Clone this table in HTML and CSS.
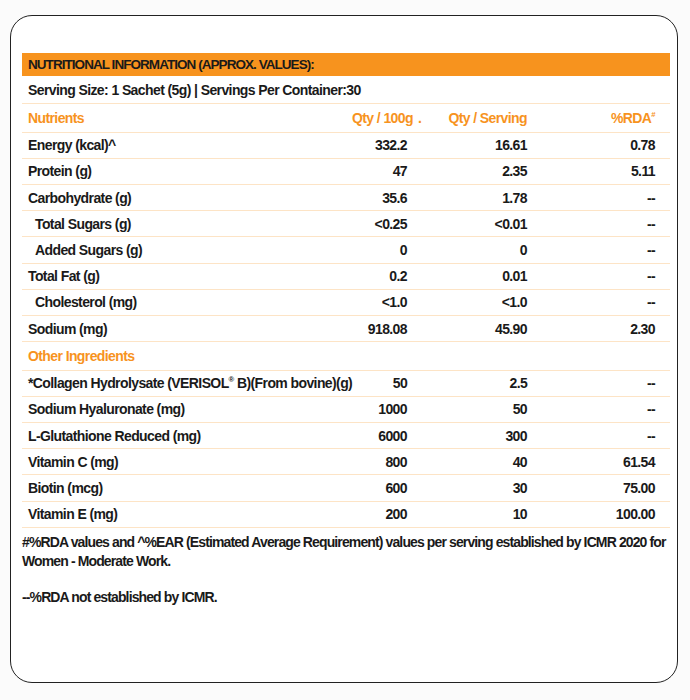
FILE: index.html
```html
<!DOCTYPE html>
<html lang="en">
<head>
<meta charset="utf-8">
<title>Nutritional Information</title>
<link rel="stylesheet" href="styles.css">
</head>
<body>
<div class="card">
  <div class="facts">
    <div class="title">NUTRITIONAL INFORMATION (APPROX. VALUES):</div>
    <div class="row serving">Serving Size: 1 Sachet (5g) | Servings Per Container:30</div>
    <div class="row head">
      <span>Nutrients</span>
      <span class="num"><span class="over">Qty / 100g<span class="dot">.</span></span></span>
      <span class="num">Qty / Serving</span>
      <span class="num">%RDA<sup>#</sup></span>
    </div>
    <div class="row"><span>Energy (kcal)^</span><span class="num">332.2</span><span class="num">16.61</span><span class="num">0.78</span></div>
    <div class="row"><span>Protein (g)</span><span class="num">47</span><span class="num">2.35</span><span class="num">5.11</span></div>
    <div class="row"><span>Carbohydrate (g)</span><span class="num">35.6</span><span class="num">1.78</span><span class="num">--</span></div>
    <div class="row sub"><span>Total Sugars (g)</span><span class="num">&lt;0.25</span><span class="num">&lt;0.01</span><span class="num">--</span></div>
    <div class="row sub"><span>Added Sugars (g)</span><span class="num">0</span><span class="num">0</span><span class="num">--</span></div>
    <div class="row"><span>Total Fat (g)</span><span class="num">0.2</span><span class="num">0.01</span><span class="num">--</span></div>
    <div class="row sub"><span>Cholesterol (mg)</span><span class="num">&lt;1.0</span><span class="num">&lt;1.0</span><span class="num">--</span></div>
    <div class="row"><span>Sodium (mg)</span><span class="num">918.08</span><span class="num">45.90</span><span class="num">2.30</span></div>
    <div class="row head"><span>Other Ingredients</span></div>
    <div class="row"><span>*Collagen Hydrolysate (VERISOL<sup>®</sup> B)(From bovine)(g)</span><span class="num">50</span><span class="num">2.5</span><span class="num">--</span></div>
    <div class="row"><span>Sodium Hyaluronate (mg)</span><span class="num">1000</span><span class="num">50</span><span class="num">--</span></div>
    <div class="row"><span>L-Glutathione Reduced (mg)</span><span class="num">6000</span><span class="num">300</span><span class="num">--</span></div>
    <div class="row"><span>Vitamin C (mg)</span><span class="num">800</span><span class="num">40</span><span class="num">61.54</span></div>
    <div class="row"><span>Biotin (mcg)</span><span class="num">600</span><span class="num">30</span><span class="num">75.00</span></div>
    <div class="row"><span>Vitamin E (mg)</span><span class="num">200</span><span class="num">10</span><span class="num">100.00</span></div>
  </div>
  <div class="notes">
    <p>#%RDA values and ^%EAR (Estimated Average Requirement) values per serving established by ICMR 2020 for<br>Women - Moderate Work.</p>
    <p>--%RDA not established by ICMR.</p>
  </div>
</div>
</body>
</html>
```

FILE: styles.css
```css
html, body {
  margin: 0;
  padding: 0;
  background: #fbfbfb;
}

body {
  font-family: "Liberation Sans", Arial, sans-serif;
  font-weight: 700;
  font-size: 14px;
  letter-spacing: -0.6px;
  color: #1a1a1a;
  padding: 15px 0 0 10px;
  width: 690px;
  height: 700px;
  box-sizing: border-box;
  overflow: hidden;
}

.card {
  width: 668px;
  height: 668px;
  box-sizing: border-box;
  border: 1.5px solid #222;
  border-radius: 22px;
  background: #fff;
  padding: 37px 7px 0 11px;
}

.facts {
  display: flex;
  flex-direction: column;
}

.title {
  background: #f7931e;
  height: 23px;
  line-height: 24px;
  padding-left: 6px;
  font-size: 13.5px;
  letter-spacing: -0.95px;
  white-space: nowrap;
}

.row {
  display: grid;
  grid-template-columns: 1fr 55px 120px 128px;
  align-items: center;
  height: 26.2px;
  padding: 0 15px 0 6px;
  border-bottom: 1.5px solid #fde4c6;
  box-sizing: border-box;
  white-space: nowrap;
}

.row.serving {
  display: block;
  height: 28.3px;
  line-height: 28px;
}

.row.head {
  height: 28.4px;
  color: #f7931e;
}

.row.sub > span:first-child {
  padding-left: 7px;
}

.num {
  text-align: right;
}

.dot {
  margin-left: 5px;
  margin-right: -8px;
}

sup {
  font-size: 0.55em;
  line-height: 0;
  vertical-align: 0.75em;
}

.notes {
  padding-top: 5px;
  letter-spacing: -0.88px;
}

.notes p {
  margin: 0 0 17px;
  line-height: 19px;
  white-space: nowrap;
}
```
